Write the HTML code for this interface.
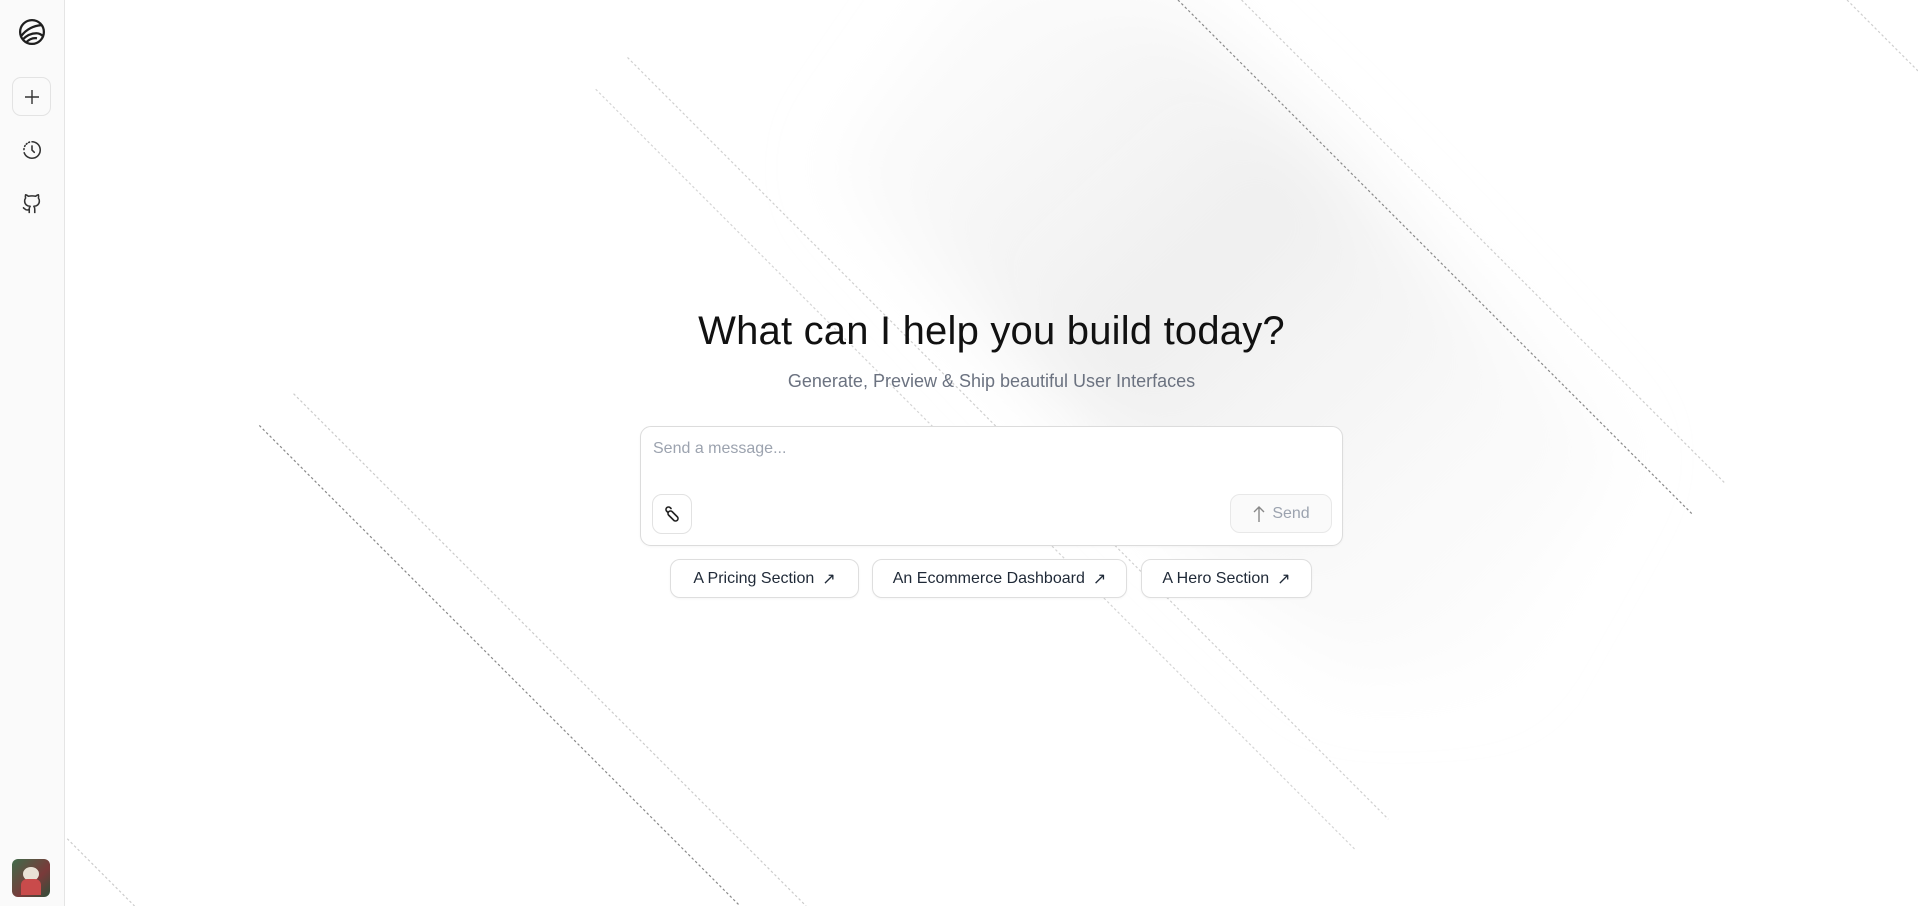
<!DOCTYPE html>
<html><head><meta charset="utf-8"><style>
*{box-sizing:border-box;margin:0;padding:0}
body{width:1918px;height:906px;overflow:hidden;background:#fff;font-family:"Liberation Sans",sans-serif;position:relative;color:#111827}
#bg{position:absolute;left:0;top:0;width:1918px;height:906px}
.side{position:absolute;left:0;top:0;width:65px;height:906px;background:#fafafa;border-right:1px solid #e5e5e5;z-index:2}
.ic{position:absolute;left:12px;width:39px;height:39px;display:flex;align-items:center;justify-content:center}
h1{position:absolute;left:0;width:1983px;text-align:center;top:309px;font-size:40px;font-weight:500;letter-spacing:0.2px;color:#111}
.sub{position:absolute;left:0;width:1983px;text-align:center;top:371px;font-size:18px;color:#6b7280}
.box{position:absolute;left:640px;top:426px;width:703px;height:120px;border:1px solid #dcdcdc;border-radius:11px;background:#fff;box-shadow:0 1px 2px rgba(0,0,0,.04)}
.ph{position:absolute;left:12px;top:13px;font-size:16px;color:#9ca3af}
.att{position:absolute;left:11px;top:67px;width:40px;height:40px;border:1px solid #e2e2e2;border-radius:10px;display:flex;align-items:center;justify-content:center}
.send{position:absolute;left:589px;top:67px;width:102px;height:39px;border:1px solid #e8e8e8;border-radius:10px;background:#fafafa;display:flex;align-items:center;justify-content:center;gap:6px;color:#9ca3af;font-size:16px}
.chip{position:absolute;top:559px;height:39px;border:1px solid #dedede;border-radius:10px;background:#fff;display:flex;align-items:center;justify-content:center;gap:8px;font-size:16px;color:#1f2937;box-shadow:0 1px 2px rgba(0,0,0,.04)}
</style></head><body>
<svg id="bg" viewBox="0 0 1568 741" preserveAspectRatio="none">
<defs><linearGradient id="g" x1="0" y1="0" x2="1" y2="1"><stop offset="0" stop-color="#f3f3f3" stop-opacity="0"/><stop offset="0.45" stop-color="#efefef"/><stop offset="1" stop-color="#f6f6f6" stop-opacity="0"/></linearGradient>
<filter id="b" x="-20%" y="-20%" width="140%" height="140%"><feGaussianBlur stdDeviation="30"/></filter></defs>
<polygon points="800,-40 963,0 1330,370 1230,560 1100,560 680,140" fill="url(#g)" filter="url(#b)"/>
<g fill="none" stroke-dasharray="2 2">
<line x1="963" y1="0" x2="1383" y2="420" stroke="#8a8a8a"/>
<line x1="1015" y1="0" x2="1410" y2="395" stroke="#cfcfcf"/>
<line x1="1510" y1="0" x2="1568" y2="58" stroke="#cfcfcf"/>
<line x1="513" y1="47" x2="1135" y2="670" stroke="#d0d0d0"/>
<line x1="487" y1="73" x2="1108" y2="695" stroke="#d5d5d5"/>
<line x1="240" y1="322" x2="659" y2="741" stroke="#cccccc"/>
<line x1="212" y1="348" x2="605" y2="741" stroke="#8a8a8a"/>
<line x1="55" y1="686" x2="110" y2="741" stroke="#cccccc"/>
</g></svg>
<div class="side">
 <div class="ic" style="top:12px"><svg width="30" height="30" viewBox="0 0 24 24" fill="none" stroke="#1f1f1f" stroke-width="1.8"><circle cx="12" cy="12" r="9.5"/><path d="M3.5 15c4-5 9-8 16-8.5M4.5 18c3-3 7-5 11-5 2 0 4 1 5.5 2.5M7 20.5c3-3 6-4 9-3.5"/></svg></div>
 <div class="ic" style="top:77px;border:1px solid #e3e3e3;border-radius:9px;background:#fafafa"><svg width="18" height="18" viewBox="0 0 18 18" stroke="#333" stroke-width="1.4"><path d="M9 2v14M2 9h14"/></svg></div>
 <div class="ic" style="top:130px"><svg width="22" height="22" viewBox="0 0 24 24" fill="none" stroke="#333" stroke-width="1.7" stroke-linecap="round"><path d="M12 3a9 9 0 1 1-8.5 12" /><path d="M3.2 11.5l.1-1M4 8l.5-.9M5.8 5.6l.8-.7M8.4 3.8l.9-.4" /><path d="M12 7.5V12l2.5 2.5"/></svg></div>
 <div class="ic" style="top:184px"><svg width="22" height="22" viewBox="0 0 24 24" fill="none" stroke="#333" stroke-width="1.7" stroke-linejoin="round"><path d="M15 22v-4a4.8 4.8 0 0 0-1-3.5c3 0 6-2 6-5.5.08-1.25-.27-2.48-1-3.5.28-1.15.28-2.35 0-3.5 0 0-1 0-3 1.5-2.64-.5-5.36-.5-8 0C6 2 5 2 5 2c-.3 1.15-.3 2.35 0 3.5A5.4 5.4 0 0 0 4 9c0 3.5 3 5.5 6 5.5-.39.49-.68 1.05-.85 1.650S8.93 17.38 9 18v4"/><path d="M9 18c-4.51 2-5-2-7-2"/></svg></div>
 <div style="position:absolute;left:12px;top:859px;width:38px;height:38px;border-radius:6px;background:linear-gradient(135deg,#3f6b4a,#7a3a3a 60%,#2f4f3a);overflow:hidden"><div style="position:absolute;left:11px;top:8px;width:16px;height:14px;border-radius:50%;background:#e9e2d6"></div><div style="position:absolute;left:9px;top:20px;width:20px;height:16px;border-radius:6px 6px 0 0;background:#c94b4b"></div></div>
</div>
<div style="position:absolute;left:0;top:0;z-index:3;width:1918px">
<h1>What can I help you build today?</h1>
<div class="sub">Generate, Preview &amp; Ship beautiful User Interfaces</div>
<div class="box">
 <div class="ph">Send a message...</div>
 <div class="att"><svg width="24" height="24" viewBox="0 0 24 24" fill="none" stroke="#222" stroke-width="1.6" stroke-linecap="round" stroke-linejoin="round"><path d="M14 18.5l-5.5-5.5a2.5 2.5 0 0 1 3.5-3.5l5.5 5.5a2.5 2.5 0 0 1-3.5 3.5"/><path d="M8 10.5L6.5 9a2.5 2.5 0 0 1 3.5-3.5l1 1"/></svg></div>
 <div class="send"><svg width="14" height="18" viewBox="0 0 14 18" fill="none" stroke="#888" stroke-width="1.4"><path d="M7 17V2M2 7l5-5 5 5"/></svg>Send</div>
</div>
<div class="chip" style="left:670px;width:189px">A Pricing Section <span>↗</span></div>
<div class="chip" style="left:872px;width:255px">An Ecommerce Dashboard <span>↗</span></div>
<div class="chip" style="left:1141px;width:171px">A Hero Section <span>↗</span></div>
</div>
</body></html>
